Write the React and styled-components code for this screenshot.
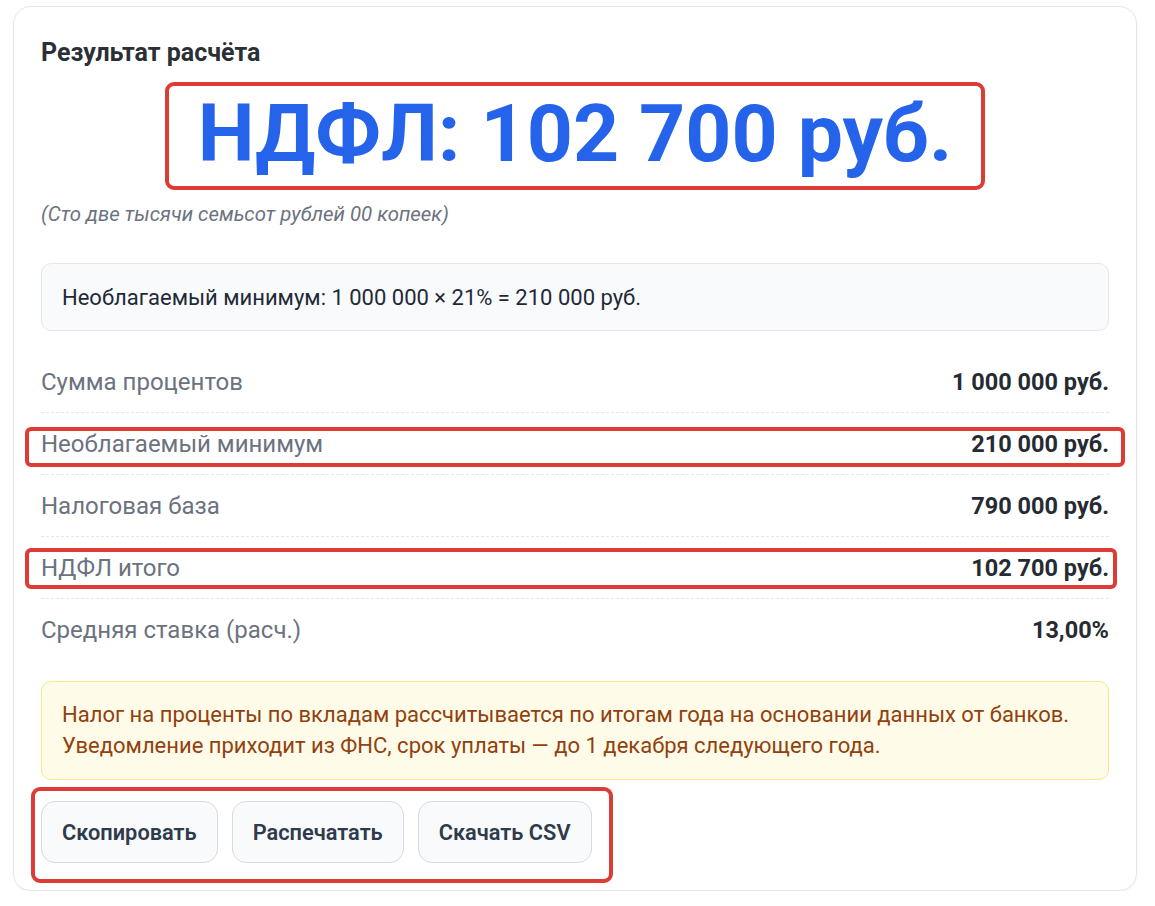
import React from 'react';
import styled, { createGlobalStyle } from 'styled-components';

const rows = [
  { label: 'Сумма процентов', value: '1 000 000 руб.' },
  { label: 'Необлагаемый минимум', value: '210 000 руб.', mark: { top: 14, bottom: 7, right: -16 } },
  { label: 'Налоговая база', value: '790 000 руб.' },
  { label: 'НДФЛ итого', value: '102 700 руб.', mark: { top: 11, bottom: 9, right: -8 } },
  { label: 'Средняя ставка (расч.)', value: '13,00%' }
];

const buttons = ['Скопировать', 'Распечатать', 'Скачать CSV'];

function App() {
  return (
    <>
      <GlobalStyle />
      <Card>
        <Title>Результат расчёта</Title>
        <AmountWrap>
          <Amount>НДФЛ: 102 700 руб.</Amount>
        </AmountWrap>
        <AmountWords>(Сто две тысячи семьсот рублей 00 копеек)</AmountWords>

        <Formula>Необлагаемый минимум: 1 000 000 × 21% = 210 000 руб.</Formula>

        <Rows>
          {rows.map(row => (
            <Row key={row.label} mark={row.mark}>
              <Label>{row.label}</Label>
              <Value>{row.value}</Value>
            </Row>
          ))}
        </Rows>

        <Notice>
          Налог на проценты по вкладам рассчитывается по итогам года на основании данных от банков.
          <br />
          Уведомление приходит из ФНС, срок уплаты — до 1 декабря следующего года.
        </Notice>

        <Actions>
          {buttons.map(text => (
            <Button key={text} type="button">{text}</Button>
          ))}
        </Actions>
      </Card>
    </>
  );
}

const GlobalStyle = createGlobalStyle`
  body {
    margin: 0;
    background: #ffffff;
    font-family: Roboto, "Noto Sans", "Liberation Sans", sans-serif;
  }
`

const Card = styled.section`
  box-sizing: border-box;
  width: 1124px;
  margin: 6px 0 0 13px;
  padding: 31px 27px 27px;
  background: #ffffff;
  border: 1px solid #e5e7eb;
  border-radius: 18px;
  box-shadow: 0 1px 3px rgba(15, 23, 42, 0.05);
`

const Title = styled.h2`
  margin: 0;
  font-size: 25px;
  line-height: 30px;
  font-weight: 700;
  color: #2b2f36;
`

const AmountWrap = styled.div`
  display: flex;
  justify-content: center;
  margin-top: 18px;
`

const Amount = styled.div`
  padding: 0 29px;
  height: 100px;
  line-height: 96px;
  font-size: 80.5px;
  font-weight: 700;
  color: #2563eb;
  white-space: nowrap;
  outline: 4px solid #dc3c35;
  border-radius: 5px;
`

const AmountWords = styled.p`
  margin: 15px 0 0;
  font-size: 20.4px;
  line-height: 26px;
  font-style: italic;
  color: #6b7280;
`

const Formula = styled.div`
  box-sizing: border-box;
  margin-top: 36px;
  height: 68px;
  display: flex;
  align-items: center;
  padding: 0 20px;
  background: #f8fafc;
  border: 1px solid #e5e7eb;
  border-radius: 10px;
  font-size: 22px;
  color: #1f2937;
`

const Rows = styled.div`
  margin-top: 20px;
`

const Row = styled.div`
  position: relative;
  box-sizing: border-box;
  height: 62px;
  display: flex;
  align-items: center;
  justify-content: space-between;
  border-bottom: 1px dashed #e5e7eb;

  &:last-child {
    border-bottom: none;
  }

  ${props => props.mark && `
    &::after {
      content: '';
      position: absolute;
      left: -16px;
      right: ${props.mark.right}px;
      top: ${props.mark.top}px;
      bottom: ${props.mark.bottom}px;
      border: 4px solid #dc3c35;
      border-radius: 6px;
      pointer-events: none;
    }
  `}
`

const Label = styled.span`
  font-size: 24px;
  color: #6b7280;
`

const Value = styled.span`
  font-size: 23.5px;
  font-weight: 700;
  color: #262b33;
`

const Notice = styled.div`
  margin-top: 20px;
  padding: 17px 20px 18px;
  background: #fefce8;
  border: 1px solid #fde68a;
  border-radius: 10px;
  font-size: 22px;
  line-height: 31px;
  color: #92400e;
`

const Actions = styled.div`
  display: flex;
  gap: 14px;
  width: fit-content;
  margin: 11px 0 -16px -6px;
  padding: 10px 17px 16px 6px;
  outline: 4px solid #dc3c35;
  border-radius: 5px;
`

const Button = styled.button`
  height: 62px;
  padding: 0 20px;
  background: #f8fafc;
  border: 1px solid #d6dbe3;
  border-radius: 14px;
  font-family: inherit;
  font-size: 21.8px;
  font-weight: 600;
  color: #2f3a4b;
  cursor: pointer;
`

export default App;
